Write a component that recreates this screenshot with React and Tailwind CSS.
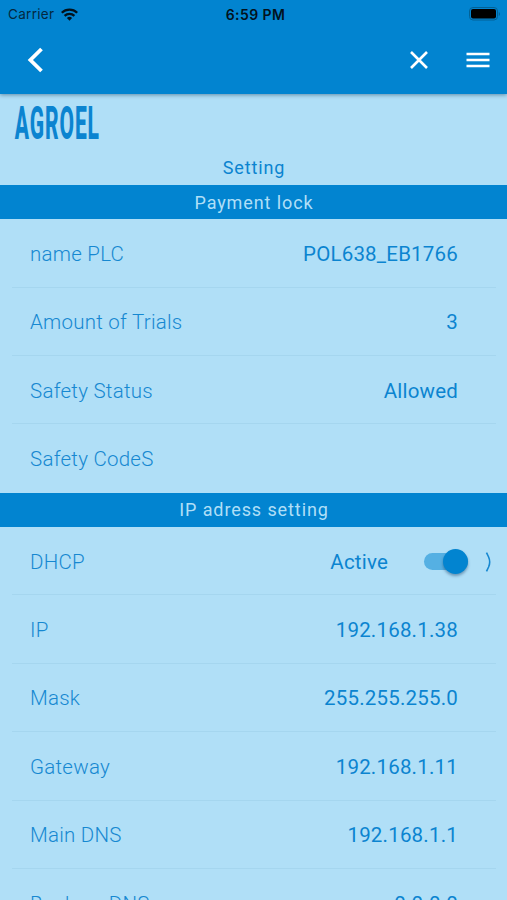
const lockRows = [
  ["name PLC", "POL638_EB1766"],
  ["Amount of Trials", "3"],
  ["Safety Status", "Allowed"],
  ["Safety CodeS", ""],
];

const ipRows = [
  ["DHCP", "Active", true],
  ["IP", "192.168.1.38"],
  ["Mask", "255.255.255.0"],
  ["Gateway", "192.168.1.11"],
  ["Main DNS", "192.168.1.1"],
  ["Backup\u00a0 DNS", "0.0.0.0"],
];

function Section({ title, rows }) {
  return (
    <section>
      <h2 className="flex h-[34.2px] items-center justify-center bg-[#0284d0] pl-[1px] text-[18px] tracking-[0.9px] text-[#b0dff7]">
        {title}
      </h2>
      {rows.map(([label, value, toggle], i) => (
        <div
          key={label}
          className={
            "ml-3 mr-[11px] flex h-[68.4px] items-center justify-between border-b pl-[18px] pt-[2.6px] text-[20.5px] " +
            (i === rows.length - 1 ? "border-transparent" : "border-[#a5d6ef]")
          }
        >
          <span className="font-light tracking-[0.25px] text-[#1688d1]">{label}</span>
          {toggle ? (
            <div className="flex items-center">
              <span className="tracking-[0.2px]">{value}</span>
              <div className="ml-9 flex h-[17px] w-11 items-center justify-end rounded-full bg-[#55b0e3]">
                <div className="h-[25px] w-[25px] shrink-0 rounded-full bg-[#0284d0] shadow-[0_2px_3px_rgba(0,40,80,0.4)]" />
              </div>
              <svg className="ml-[17px] mr-[3px] h-5 w-2" viewBox="0 0 8 20" fill="none" stroke="#1688d1" strokeWidth="1.6">
                <path d="M1.5 .7 3.6 5Q5.8 10 3.6 15L1.5 19.3" />
              </svg>
            </div>
          ) : (
            <span className="pr-[38px] tracking-[0.2px]">{value}</span>
          )}
        </div>
      ))}
    </section>
  );
}

export default function App() {
  return (
    <div className="h-[900px] w-full overflow-hidden bg-[#b0dff7] font-['Roboto',sans-serif] text-[#0b84d0]">
      <header className="relative h-[93.5px] bg-[#0284d0] shadow-[0_1px_4px_rgba(0,40,70,0.45)]">
        <div className="grid h-7 grid-cols-3 items-center pl-2 pr-[7px] font-['Inter',sans-serif] text-[13.5px] text-[#04283f]">
          <div className="flex items-center gap-[7px]">
            <span className="tracking-[0.3px]">Carrier</span>
            <svg className="h-[13px] w-[17px]" viewBox="0 0 17 13" fill="none" stroke="#02121d" strokeWidth="2.3">
              <path d="M.8 4.8a11 11 0 0 1 15.4 0M3.6 7.9a7 7 0 0 1 9.8 0" />
              <path d="M5.9 10a3.8 3.8 0 0 1 5.2 0L8.5 12.7Z" fill="#02121d" stroke="none" />
            </svg>
          </div>
          <span className="pl-[3px] text-center text-[14px] font-semibold tracking-[0.4px] text-[#02121d]">6:59 PM</span>
          <svg className="h-[14px] w-8 justify-self-end" viewBox="0 0 32 14">
            <rect x="1.5" y=".5" width="28" height="12.5" rx="3.5" fill="none" stroke="#036195" />
            <rect x="3" y="2" width="25" height="9.5" rx="2" fill="#000" />
            <path d="M30.8 5v4q1.2-.5 1.2-2t-1.2-2" fill="#036195" />
          </svg>
        </div>
        <div className="flex h-[63px] items-center pl-[26px] pr-[17px]">
          <svg className="h-7 w-5" viewBox="0 0 20 28" fill="none" stroke="#fff" strokeWidth="3.8">
            <path d="M15.5 3 4.4 14l11.1 11" />
          </svg>
          <svg className="ml-auto h-5 w-5" viewBox="0 0 20 20" fill="none" stroke="#fff" strokeWidth="2.6">
            <path d="m2 2 16 16M18 2 2 18" />
          </svg>
          <svg className="ml-[37px] h-5 w-6" viewBox="0 0 24 20" fill="none" stroke="#fff" strokeWidth="2.6">
            <path d="M.5 4H23.5M.5 10H23.5M.5 16H23.5" />
          </svg>
        </div>
      </header>
      <div className="h-[57px] pl-[14px]">
        <svg className="h-[57px] w-[110px]" viewBox="0 0 110 57" fill="#0b84d0">
          <text
            transform="translate(0.8 45) scale(0.457 1)"
            fontFamily="Roboto"
            fontSize="46"
            fontWeight="800"
            letterSpacing="2"
          >
            AGROEL
          </text>
        </svg>
      </div>
      <h1 className="flex h-[34.5px] items-center justify-center pl-[1px] text-[18px] tracking-[0.9px]">Setting</h1>
      <Section title="Payment lock" rows={lockRows} />
      <Section title="IP adress setting" rows={ipRows} />
    </div>
  );
}
